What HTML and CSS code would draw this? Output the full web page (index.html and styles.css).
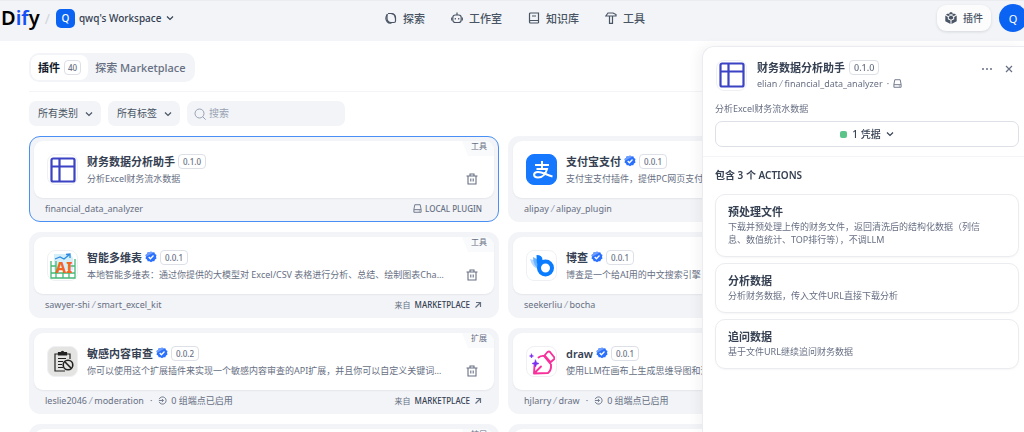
FILE: index.html
```html
<!doctype html>
<html lang="zh-CN">
<head>
    <meta charset="UTF-8">
    <meta name="viewport" content="width=device-width, initial-scale=1.0">
    <title>插件 - Dify</title>
    <link rel="stylesheet" href="styles.css">
</head>
<body>
<svg class="sprite" aria-hidden="true">
    <symbol id="chevron" viewBox="0 0 8 8"><path d="M1 2.5l3 3 3-3" fill="none" stroke="currentColor" stroke-width="1.2"/></symbol>
    <symbol id="trash" viewBox="0 0 12 12"><path d="M.5 3h11M4 3V1h4v2M2 3v8h8V3M4.8 5.5v3M7.2 5.5v3" fill="none" stroke="currentColor" stroke-width="1.1"/></symbol>
    <symbol id="verified" viewBox="0 0 12 12">
        <path d="M6 .4l1.5 1 1.8-.1.7 1.7 1.5 1-.5 1.8.5 1.8-1.5 1-.7 1.7-1.8-.1-1.5 1-1.5-1-1.8.1L2 8.6l-1.5-1L1 5.8.5 4 2 3l.7-1.700 1.800.1z" fill="#2970ff"/>
        <path d="M1 5.8L.5 4 2 3l.7-1.7 1.8.1L6 .4l1.5 1 1.8-.1z" fill="#6f9dff"/>
        <path d="M3.7 6l1.7 1.700L8.500 4.500" fill="none" stroke="#fff" stroke-width="1.300"/>
    </symbol>
    <symbol id="arrow" viewBox="0 0 8 8"><path d="M1.500 6.500l5-5M2 1.500h4.500V6" fill="none" stroke="currentColor" stroke-width="1.200"/></symbol>
    <symbol id="drive" viewBox="0 0 10 10"><path d="M2 .8h6l1 5.200v3.200H1V6zM1 6.300h8M6.500 7.800h1" fill="none" stroke="currentColor"/></symbol>
    <symbol id="endpoint" viewBox="0 0 10 10"><path d="M1.300 3.500a4 4 0 1 1 0 3M1 5h5M4.300 3.300L6 5 4.300 6.700" fill="none" stroke="currentColor"/></symbol>
    <symbol id="table" viewBox="0 0 26 26"><path d="M3 1.500h20a1.500 1.500 0 0 1 1.500 1.500v20a1.500 1.500 0 0 1-1.500 1.500H3A1.500 1.500 0 0 1 1.500 23V3A1.500 1.500 0 0 1 3 1.500zM1.500 9.500h23M9.500 1.500v23" fill="none" stroke="#3b43c4" stroke-width="2.200"/></symbol>
</svg>

<header class="topbar">
    <div class="brand">
        <a class="logo" href="#">D<span>if</span>y</a>
        <span class="slash">/</span>
        <button class="workspace">
            <span class="workspace-icon">Q</span>
            qwq's Workspace
            <svg class="icon-xs"><use href="#chevron"/></svg>
        </button>
    </div>
    <nav class="nav">
        <a href="#">
            <svg class="icon-md" viewBox="0 0 12 12" fill="none" stroke="currentColor" stroke-width="1.200"><path d="M3 1.500h3.500a4 4 0 0 1 4 4V9q0 1.500-1.500 1.500H6a4 4 0 0 1-4-4V2.500"/><path d="M2.500 2Q-.500 6 2 9.500q2 2.200 4.500 1.500M6 1.500q4 .500 4.500 5"/></svg>
            探索
        </a>
        <a href="#">
            <svg class="icon-md" viewBox="0 0 12 12" fill="none" stroke="currentColor" stroke-width="1.200"><rect x="1.800" y="3" width="8.400" height="7.500" rx="2.500"/><path d="M6 3V.5M.3 5.500v3M11.700 5.500v3M4.300 6v1.500M7.700 6v1.500"/></svg>
            工作室
        </a>
        <a href="#">
            <svg class="icon-md" viewBox="0 0 12 12" fill="none" stroke="currentColor" stroke-width="1.200"><path d="M10.500 8.500V1h-8a1 1 0 0 0-1 1v8a1 1 0 0 0 1 1h8M1.500 9.500q0-1 1-1h8V11M4 4h4"/></svg>
            知识库
        </a>
        <a href="#">
            <svg class="icon-md" viewBox="0 0 12 12" fill="none" stroke="currentColor" stroke-width="1.200"><path d="M.8 4L3 1h5l3 1.500V4H7.500v7.300h-3V4zM4.500 4h3"/></svg>
            工具
        </a>
    </nav>
    <div class="account">
        <button class="plugins-button">
            <svg class="icon-md" viewBox="0 0 12 12" fill="currentColor"><path d="M6 0l2.300 1.200L6 2.400 3.700 1.200zM3 1.600l2.500 1.300L3.300 4 .8 2.800zM9 1.600l2.200 1.200L8.700 4 6.500 2.900zM.3 3.600l2.500 1.300v2.300l2.700 1.400V12L.3 9.300zM11.700 3.600v5.700L6.500 12V8.600l2.700-1.400V4.900zM6 3.600l2.200 1.200v1.800L6 7.700 3.800 6.600V4.800z"/></svg>
            插件
        </button>
        <button class="avatar">Q</button>
    </div>
</header>

<main class="content">
    <div class="tabs-row">
        <div class="tabs">
            <button class="tab active">插件 <span class="badge">40</span></button>
            <button class="tab">探索 Marketplace</button>
        </div>
    </div>
    <div class="filters">
        <button class="filter">所有类别 <svg class="icon-xs"><use href="#chevron"/></svg></button>
        <button class="filter">所有标签 <svg class="icon-xs"><use href="#chevron"/></svg></button>
        <label class="search">
            <svg class="icon-md" viewBox="0 0 12 12" fill="none" stroke="currentColor"><circle cx="5.500" cy="5.500" r="4.500"/><path d="M8.700 8.700l3 3"/></svg>
            <input type="text" placeholder="搜索" aria-label="搜索">
        </label>
    </div>

    <div class="plugin-grid">
        <article class="plugin selected">
            <div class="plugin-body">
                <span class="corner">工具</span>
                <div class="plugin-icon"><svg><use href="#table"/></svg></div>
                <div class="plugin-info">
                    <h3>财务数据分析助手 <span class="badge">0.1.0</span></h3>
                    <p>分析Excel财务流水数据</p>
                </div>
                <button class="delete" aria-label="删除"><svg class="icon-md"><use href="#trash"/></svg></button>
            </div>
            <footer>
                <span>financial_data_analyzer</span>
                <span class="source local"><svg class="icon-sm"><use href="#drive"/></svg>LOCAL PLUGIN</span>
            </footer>
        </article>

        <article class="plugin">
            <div class="plugin-body">
                <span class="corner">工具</span>
                <div class="plugin-icon alipay">
                    <svg viewBox="0 0 26 26" fill="none" stroke="#fff" stroke-width="2"><path d="M6 8h14M13 4v8M7.500 12h10.500c-1 4-4 8.500-9 8.500-5.500 0-5-5.500 0-5.500 5 0 8 3 14.500 4.500"/></svg>
                </div>
                <div class="plugin-info">
                    <h3>支付宝支付 <svg class="icon-md"><use href="#verified"/></svg> <span class="badge">0.0.1</span></h3>
                    <p>支付宝支付插件，提供PC网页支付、手机支付等能力</p>
                </div>
                <button class="delete" aria-label="删除"><svg class="icon-md"><use href="#trash"/></svg></button>
            </div>
            <footer>
                <span>alipay<i>/</i>alipay_plugin</span>
                <a class="source" href="#">来自 <b>MARKETPLACE</b><svg class="icon-xs"><use href="#arrow"/></svg></a>
            </footer>
        </article>

        <article class="plugin">
            <div class="plugin-body">
                <span class="corner">工具</span>
                <div class="plugin-icon">
                    <svg viewBox="0 0 26 26">
                        <path d="M4 1h16l3 4v12H4z" fill="#d5effa"/>
                        <path d="M1 8v17h24V6M1 13h5M20 13h5M1 20h24M6 8v17M13 20v5M19 20v5" fill="none" stroke="#45b978" stroke-width="1.300"/>
                        <path d="M5 6l5-2 4 2 5-4M16 1.500l4-.5v4" fill="none" stroke="#2e8be0" stroke-width="1.300"/>
                        <text class="ai-mark" x="14" y="20" text-anchor="middle">AI</text>
                    </svg>
                </div>
                <div class="plugin-info">
                    <h3>智能多维表 <svg class="icon-md"><use href="#verified"/></svg> <span class="badge">0.0.1</span></h3>
                    <p>本地智能多维表：通过你提供的大模型对 Excel/CSV 表格进行分析、总结、绘制图表Cha…</p>
                </div>
                <button class="delete" aria-label="删除"><svg class="icon-md"><use href="#trash"/></svg></button>
            </div>
            <footer>
                <span>sawyer-shi<i>/</i>smart_excel_kit</span>
                <a class="source" href="#">来自 <b>MARKETPLACE</b><svg class="icon-xs"><use href="#arrow"/></svg></a>
            </footer>
        </article>

        <article class="plugin">
            <div class="plugin-body">
                <span class="corner">工具</span>
                <div class="plugin-icon">
                    <svg viewBox="0 0 26 26">
                        <path d="M1 6q6 1 8 4v6Q3 14 1 6z" fill="#b5d8ff"/>
                        <path d="M4 4q5 2 7 5v8Q4 13 4 4z" fill="#6db2ff"/>
                        <path d="M7.500 2q6 0 6 5v8h-4Q7 9 7.500 2z" fill="#0a7cff"/>
                        <circle cx="16.500" cy="15" r="6.500" fill="#fff" stroke="#0a7cff" stroke-width="4"/>
                    </svg>
                </div>
                <div class="plugin-info">
                    <h3>博查 <svg class="icon-md"><use href="#verified"/></svg> <span class="badge">0.0.1</span></h3>
                    <p>博查是一个给AI用的中文搜索引擎，让你的应用连接世界知识</p>
                </div>
                <button class="delete" aria-label="删除"><svg class="icon-md"><use href="#trash"/></svg></button>
            </div>
            <footer>
                <span>seekerliu<i>/</i>bocha</span>
                <a class="source" href="#">来自 <b>MARKETPLACE</b><svg class="icon-xs"><use href="#arrow"/></svg></a>
            </footer>
        </article>

        <article class="plugin">
            <div class="plugin-body">
                <span class="corner">扩展</span>
                <div class="plugin-icon gray">
                    <svg viewBox="0 0 26 26" fill="none" stroke="#222" stroke-width="1.200">
                        <path d="M20 10V5H5v17h10M8 9.500h8M8 12.500h5M8 15.500h4M8 18.500h5"/>
                        <path d="M8.500 6V3.500h2.500q1.500-2.500 3 0h2.500V6z" fill="#222"/>
                        <circle cx="18" cy="16" r="4.800" stroke-width="1.600"/><path d="M14.800 12.800l6.400 6.400" stroke-width="1.600"/>
                    </svg>
                </div>
                <div class="plugin-info">
                    <h3>敏感内容审查 <svg class="icon-md"><use href="#verified"/></svg> <span class="badge">0.0.2</span></h3>
                    <p>你可以使用这个扩展插件来实现一个敏感内容审查的API扩展，并且你可以自定义关键词…</p>
                </div>
                <button class="delete" aria-label="删除"><svg class="icon-md"><use href="#trash"/></svg></button>
            </div>
            <footer>
                <span>leslie2046<i>/</i>moderation</span>
                <span class="dot">·</span>
                <span class="endpoints"><svg class="icon-sm"><use href="#endpoint"/></svg>0 组端点已启用</span>
                <a class="source" href="#">来自 <b>MARKETPLACE</b><svg class="icon-xs"><use href="#arrow"/></svg></a>
            </footer>
        </article>

        <article class="plugin">
            <div class="plugin-body">
                <span class="corner">扩展</span>
                <div class="plugin-icon">
                    <svg viewBox="0 0 26 26" fill="none" stroke="#f7309b" stroke-width="1.900" stroke-linejoin="round" stroke-linecap="round">
                        <path d="M9.500 8.500Q12 6.500 15 7l7 8.500q.5 6-3 8.500l-14 .5.500-8M5.500 24l6.500-6.500"/>
                        <path d="M15.500 6.500l3-3.500q1.500-1 2.500 0l4 5q1 1.200 0 2.200l-3.500 3z"/>
                        <path d="M6.500 11l1 2.500 2.500 1-2.500 1-1 2.500-1-2.500-2.500-1 2.500-1zM2.500 5l.6 1.400 1.400.6-1.400.6-.6 1.400-.6-1.400L.5 7l1.400-.6z" fill="#7a2ff2" stroke="#7a2ff2" stroke-width=".6"/>
                    </svg>
                </div>
                <div class="plugin-info">
                    <h3>draw <svg class="icon-md"><use href="#verified"/></svg> <span class="badge">0.0.1</span></h3>
                    <p>使用LLM在画布上生成思维导图和流程图等图形</p>
                </div>
                <button class="delete" aria-label="删除"><svg class="icon-md"><use href="#trash"/></svg></button>
            </div>
            <footer>
                <span>hjlarry<i>/</i>draw</span>
                <span class="dot">·</span>
                <span class="endpoints"><svg class="icon-sm"><use href="#endpoint"/></svg>0 组端点已启用</span>
                <a class="source" href="#">来自 <b>MARKETPLACE</b><svg class="icon-xs"><use href="#arrow"/></svg></a>
            </footer>
        </article>

        <article class="plugin">
            <div class="plugin-body"><span class="corner">扩展</span></div>
        </article>
        <article class="plugin">
            <div class="plugin-body"><span class="corner">扩展</span></div>
        </article>
    </div>
</main>

<aside class="drawer">
    <div class="drawer-head">
        <div class="drawer-title">
            <div class="plugin-icon"><svg><use href="#table"/></svg></div>
            <div class="plugin-info">
                <h2>财务数据分析助手 <span class="badge large">0.1.0</span></h2>
                <div class="drawer-id">elian<i>/</i>financial_data_analyzer <span class="dot">·</span> <svg class="icon-sm"><use href="#drive"/></svg></div>
            </div>
            <button class="icon-button" aria-label="更多"><svg class="icon-md" viewBox="0 0 12 12" fill="currentColor"><circle cx="2" cy="6" r="1"/><circle cx="6" cy="6" r="1"/><circle cx="10" cy="6" r="1"/></svg></button>
            <button class="icon-button" aria-label="关闭"><svg class="icon-md" viewBox="0 0 12 12" fill="none" stroke="currentColor" stroke-width="1.200"><path d="M3 3l6 6M9 3L3 9"/></svg></button>
        </div>
        <p class="drawer-desc">分析Excel财务流水数据</p>
        <button class="credential"><span class="status"></span>1 凭据 <svg class="icon-xs"><use href="#chevron"/></svg></button>
    </div>
    <div class="actions">
        <h4>包含 3 个 ACTIONS</h4>
        <div class="action">
            <h5>预处理文件</h5>
            <p>下载并预处理上传的财务文件，返回清洗后的结构化数据（列信息、数值统计、TOP排行等），不调LLM</p>
        </div>
        <div class="action">
            <h5>分析数据</h5>
            <p>分析财务数据，传入文件URL直接下载分析</p>
        </div>
        <div class="action">
            <h5>追问数据</h5>
            <p>基于文件URL继续追问财务数据</p>
        </div>
    </div>
</aside>
</body>
</html>
```
FILE: styles.css
```css
*, *::after, *::before {
    box-sizing: border-box;
    margin: 0;
    padding: 0;
}

:root {
    --gray-bg: #f2f4f7;
    --line: #eaecf0;
    --text: #354052;
    --muted: #676f83;
    --blue: #0b63f3;
}

body {
    height: 100vh;
    display: flex;
    flex-direction: column;
    overflow: hidden;
    background: white;
    color: var(--text);
    font-family: "Noto Sans", "Noto Sans CJK SC", sans-serif;
    font-size: 9px;
    line-height: 13px;
}

button, input {
    border: 0;
    background: none;
    color: inherit;
    font: inherit;
}

button {
    cursor: pointer;
}

a {
    color: inherit;
    text-decoration: none;
}

svg {
    flex: none;
    display: block;
}

i {
    margin: 0 2px;
    color: #98a2b3;
}

.sprite {
    position: absolute;
    width: 0;
    height: 0;
}

.icon-xs {
    width: 8px;
    height: 8px;
}

.icon-sm {
    width: 9px;
    height: 9px;
}

.icon-md {
    width: 12px;
    height: 12px;
}

/* top bar */
.topbar {
    flex: none;
    display: grid;
    grid-template-columns: 1fr auto 1fr;
    align-items: center;
    height: 41px;
    padding-bottom: 6px;
    background: var(--gray-bg);
    border-top: 1px solid var(--line);
    overflow: hidden;
    font-size: 11px;
}

.brand,
.workspace,
.nav,
.nav a,
.account,
.plugins-button {
    display: flex;
    align-items: center;
}

.logo {
    padding-left: 1px;
    color: black;
    font-size: 20px;
    font-weight: 600;
    line-height: 20px;
}

.logo span {
    color: #1450f5;
}

.slash {
    margin: 0 6px 0 5px;
    color: #d0d5dd;
    font-size: 14px;
}

.workspace {
    gap: 4px;
    font-size: 10px;
    font-weight: 500;
}

.workspace-icon {
    width: 19px;
    height: 19px;
    border-radius: 5px;
    background: var(--blue);
    color: white;
    line-height: 19px;
}

.nav {
    gap: 26px;
    padding-left: 6px;
    color: #495464;
    font-weight: 500;
}

.nav a {
    gap: 6px;
}

.account {
    justify-content: flex-end;
    gap: 8px;
    margin-right: -3px;
}

.plugins-button {
    gap: 6px;
    height: 26px;
    padding: 0 8px;
    border-radius: 9px;
    background: #fcfcfd;
    box-shadow: 0 1px 3px rgba(16, 24, 40, 0.12);
    color: #495464;
    font-size: 10px;
    font-weight: 500;
}

.avatar {
    width: 28px;
    height: 28px;
    border-radius: 50%;
    background: var(--blue);
    color: white;
}

/* plugin list */
.content {
    flex: 1;
    min-height: 0;
    padding: 12px 46px 0 29px;
    overflow: auto;
    scrollbar-width: none;
}

.tabs-row {
    padding-bottom: 9px;
    border-bottom: 1px solid var(--gray-bg);
}

.tabs {
    display: inline-flex;
    padding: 2px;
    border-radius: 10px;
    background: var(--gray-bg);
    vertical-align: top;
}

.tab {
    display: flex;
    align-items: center;
    gap: 4px;
    height: 25px;
    padding: 0 7px;
    border-radius: 8px;
    color: var(--muted);
    font-size: 11px;
    font-weight: 500;
}

.tab.active {
    background: white;
    color: #101828;
    font-weight: 700;
}

.badge {
    padding: 0 4px;
    border: 1px solid #dde0e6;
    border-radius: 4px;
    background: white;
    color: var(--muted);
    font-size: 8px;
    font-weight: 500;
    line-height: 13px;
}

.badge.large {
    font-size: 9px;
}

.tab .badge {
    padding: 0 3px;
}

.filters {
    display: flex;
    gap: 7px;
    padding: 9px 0 10px;
    font-size: 10px;
}

.filter,
.search {
    display: flex;
    align-items: center;
    height: 25px;
    border-radius: 7px;
    background: var(--gray-bg);
    color: #495464;
}

.filter {
    gap: 7px;
    padding: 0 8px 0 9px;
}

.search {
    gap: 3px;
    width: 158px;
    padding: 0 7px;
    color: #98a2b3;
}

.search input {
    width: 100%;
    outline: none;
}

.search input::placeholder {
    color: #98a2b3;
}

.plugin-grid {
    display: grid;
    grid-template-columns: 1fr 1fr;
    gap: 10px 9px;
}

.plugin {
    min-width: 0;
    min-height: 86px;
    padding: 4px 4px 2px;
    border: 1px solid var(--gray-bg);
    border-radius: 11px;
    background: var(--gray-bg);
}

.plugin.selected {
    border-color: #4a8ff5;
}

.plugin-body {
    position: relative;
    display: flex;
    align-items: center;
    min-height: 57px;
    padding: 0 15px 0 13px;
    border-radius: 9px;
    background: white;
    box-shadow: 0 1px 2px rgba(16, 24, 40, 0.06);
    overflow: hidden;
}

.corner {
    position: absolute;
    top: 0;
    right: 0;
    padding: 0 7px 5px 9px;
    background: #f9fafb;
    clip-path: polygon(0 0, 100% 0, 100% 100%, 6px 100%);
    color: var(--muted);
    font-size: 8px;
    line-height: 10px;
}

.plugin-icon {
    flex: none;
    display: grid;
    place-items: center;
    width: 31px;
    height: 31px;
    border: 1px solid #eef0f3;
    border-radius: 8px;
}

.plugin-icon svg {
    width: 26px;
    height: 26px;
}

.plugin-icon.alipay {
    border-color: #1677ff;
    background: #1677ff;
}

.plugin-icon.gray {
    background: #e4e4e2;
}

.ai-mark {
    fill: #f26522;
    font-size: 15px;
    font-weight: 800;
}

.plugin-info {
    flex: 1;
    min-width: 0;
    padding-left: 9px;
}

.plugin-info h3,
.plugin-info h2 {
    display: flex;
    align-items: center;
    gap: 4px;
    font-size: 11px;
    font-weight: 600;
    line-height: 17px;
}

.plugin-info h3 {
    gap: 3px;
}

.plugin-info p {
    color: var(--muted);
    line-height: 17px;
    white-space: nowrap;
    overflow: hidden;
    text-overflow: ellipsis;
}

.delete {
    align-self: flex-end;
    padding: 0 1px 13px 4px;
    color: var(--muted);
}

.plugin footer {
    display: flex;
    align-items: center;
    height: 21px;
    padding: 0 12px 0 11px;
    color: var(--muted);
}

.dot {
    margin: 0 6px;
}

.endpoints,
.source {
    display: flex;
    align-items: center;
    gap: 4px;
}

.source {
    margin-left: auto;
    font-size: 8px;
}

.source b {
    color: var(--text);
    font-weight: 500;
}

.source.local {
    gap: 3px;
    font-weight: 500;
}

/* detail drawer */
.drawer {
    position: fixed;
    top: 46px;
    right: 0;
    bottom: 0;
    width: 322px;
    border: 1px solid var(--line);
    border-right: 0;
    border-bottom: 0;
    border-radius: 12px 0 0 0;
    background: white;
    box-shadow: -4px 0 12px rgba(16, 24, 40, 0.05);
}

.drawer-head {
    padding: 10px 5px 9px 12px;
    border-bottom: 1px solid var(--gray-bg);
}

.drawer-title {
    display: flex;
    align-items: center;
    padding: 2px 0;
}

.drawer-title .plugin-icon {
    margin-left: 1px;
}

.drawer-title .plugin-info {
    padding-left: 10px;
}

.drawer-id {
    display: flex;
    align-items: center;
    color: var(--muted);
    line-height: 15px;
}

.drawer-id .dot {
    margin: 0 4px;
}

.icon-button {
    align-self: flex-start;
    padding: 4px 5px;
    color: var(--muted);
}

.drawer-title .icon-button:last-child {
    padding-right: 4px;
}

.drawer-desc {
    padding: 9px 0 6px;
    color: var(--muted);
}

.credential {
    display: flex;
    align-items: center;
    justify-content: center;
    gap: 5px;
    width: 100%;
    height: 26px;
    border: 1px solid #dde0e6;
    border-radius: 7px;
    font-size: 10px;
    font-weight: 500;
}

.status {
    width: 7px;
    height: 7px;
    border-radius: 2px;
    background: #5bc488;
}

.actions {
    display: flex;
    flex-direction: column;
    gap: 6px;
    padding: 12px 5px 0 12px;
}

.actions h4 {
    padding-bottom: 6px;
    font-size: 10px;
    font-weight: 600;
}

.action {
    padding: 9px 22px 10px 12px;
    border: 1px solid var(--line);
    border-radius: 10px;
    box-shadow: 0 1px 2px rgba(16, 24, 40, 0.04);
}

.action h5 {
    font-size: 11px;
    font-weight: 600;
    line-height: 16px;
}

.action p {
    color: var(--muted);
}
```
